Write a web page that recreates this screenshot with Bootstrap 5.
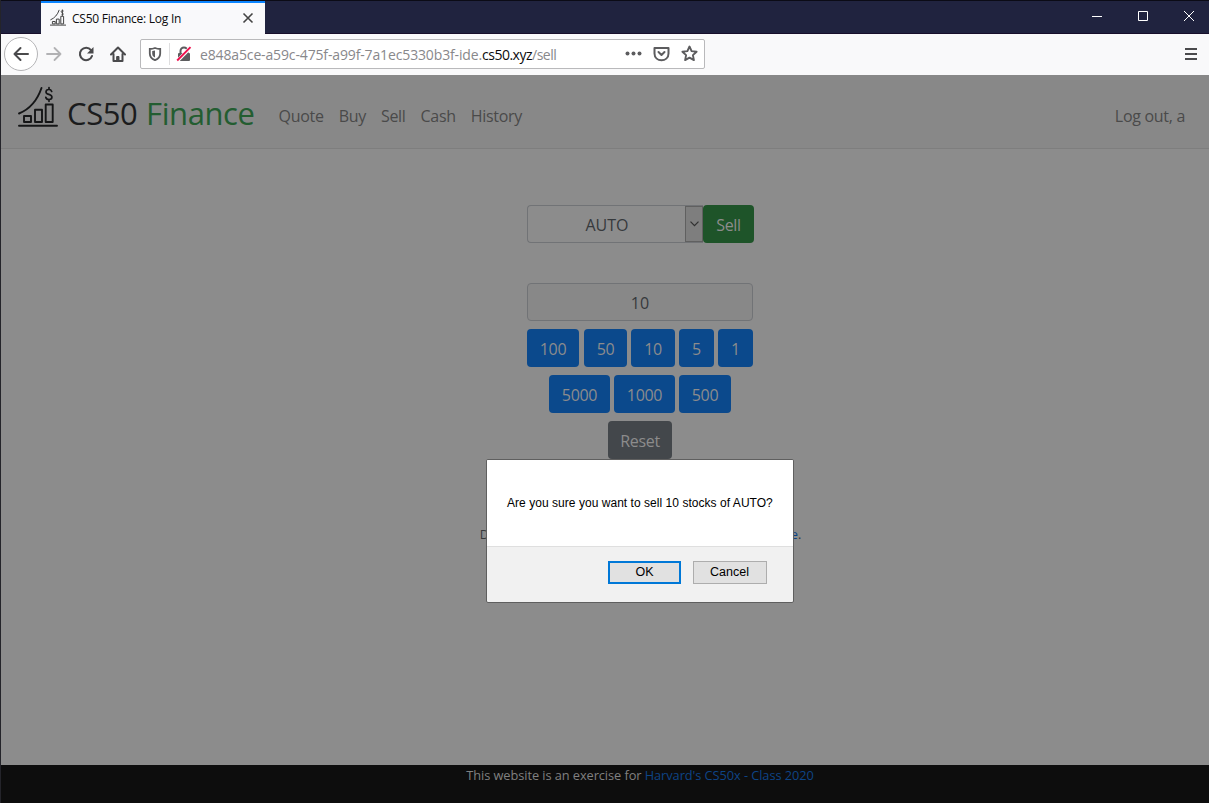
<!DOCTYPE html>
<html lang="en">
<head>
<meta charset="utf-8">
<meta name="viewport" content="width=device-width, initial-scale=1">
<title>CS50 Finance: Log In</title>
<link href="https://cdn.jsdelivr.net/npm/bootstrap@5.3.0/dist/css/bootstrap.min.css" rel="stylesheet">
<style>
body{height:803px;overflow:hidden;background:#8c8c8c;font-family:"Open Sans","Noto Sans",sans-serif;font-size:16px}
.window{height:803px;border-left:1px solid #24242a}
.titlebar{height:34px;background:#20233f;border-top:1px solid #0b0b16;border-bottom:1px solid #170f2b}
.tab{width:224px;height:34px;margin-left:40px;background:#f9f9fb;border-top:2px solid #0a84ff;font-size:12px;color:#0c0c0d;padding:0 11px 0 9px}
.tab-label{letter-spacing:-.25px;margin-left:6px}
.controls{gap:35px;padding-right:14px;padding-bottom:1px}
.toolbar{height:41px;background:#f9f9fa;padding-left:3px;padding-right:12px}
.back{width:34px;height:34px;border:1px solid #b5b5b7;background:#fff}
.url{width:565px;height:30px;margin-left:14px;background:#fff;border:1px solid #b9b9bb;border-radius:2px;padding:0 6px 0 7px;font-size:14px;color:#88888b}
.url-text{letter-spacing:-.14px;margin-left:8px;padding-top:2px}
.url-text b{font-weight:400;color:#0c0c0d}
.url-text b,.url-path{letter-spacing:-.5px}
.url-sep{width:1px;height:22px;background:#dededf;margin:0 6px 0 7px}
.site-nav{height:74px;background:#888;border-bottom:1px solid #7e7e7e;padding:0 24px 0 15px}
.brand{font-size:31px;line-height:40px;color:#1b1c1d}
.brand-name{letter-spacing:-.4px;margin-left:9px;padding-top:2px}
.brand-name span{color:#235d31;margin-left:1px}
.site-nav .nav-link{padding:0;color:#4a4a4a;letter-spacing:-.3px}
.main-links{gap:15px;margin:9px 0 0 24px}
.content{height:616px;padding:56px 0 0 71px}
.trade{width:227px}
.field{height:38px;border:1px solid #717376;border-radius:4px;color:#36393c;background:#8c8c8c}
.amount{width:226px;background:#888}
.arrow{width:18px;height:36px;background:#7e7e7e;border:1px solid #606060}
.btn{height:38px;padding:7px 0 4px;border-radius:4px;font-size:16px;color:#8c8c8c;border:0;letter-spacing:-.3px;line-height:27px}
.c-sell{background:#1e5429;width:51px}
.c-blue{background:#0b498c}
.c-gray{background:#43474b;width:64px}
.source{margin-top:65px;font-size:12.8px;line-height:20px;color:#36393c}
.source a,.foot a{color:#0d4486;text-decoration:none}
.foot{height:38px;background:#0d0d0d;color:#808080;font-size:12.8px;line-height:20px;padding-left:70px;letter-spacing:-.07px}
.confirm{position:absolute;left:486px;top:459px;width:308px;height:144px;border:1px solid #5f5f5f;border-radius:2px;background:#f1f1f1;font-family:"Liberation Sans",Arial,sans-serif;font-size:12px;color:#000;overflow:hidden}
.confirm-text{height:87px;background:#fff;border-bottom:1px solid #dfdfdf;padding-left:20px;letter-spacing:.04px}
.confirm-actions{padding:14px 26px 0 0;gap:12px}
.dlg-btn{height:23px;width:74px;border:1px solid #adadad;background:#e1e1e1;font-size:12.5px;line-height:21px;padding:0 1px 0 0;color:#000}
.dlg-main{width:73px;border:2px solid #0078d7;line-height:19px;padding:0}
svg{display:block;flex:none}
</style>
</head>
<body>
<div class="window d-flex flex-column">
  <div class="titlebar d-flex justify-content-between flex-shrink-0">
    <div class="tab d-flex align-items-center">
      <svg width="16" height="17" viewBox="0 0 40 42" fill="none" stroke="#444" stroke-width="2.5" style="margin-top:-3px"><path d="M0 40H40M1 27Q17 20 23 2M6 31h7v6H6zM16 25h7v12h-7zM27 18h7v19h-7zM34 5c-5-4-8 2-4 4s5 6-1 5M31 1v16"/></svg>
      <span class="tab-label flex-grow-1">CS50 Finance: Log In</span>
      <svg width="12" height="12" viewBox="0 0 12 12" stroke="#444" stroke-width="1.6" style="margin-top:-2px"><path d="M1.500 1.500l9 9M10.500 1.500l-9 9"/></svg>
    </div>
    <div class="controls d-flex align-items-center">
      <svg width="11" height="11" viewBox="0 0 11 11" stroke="#fff"><path d="M0 5.500h10"/></svg>
      <svg width="11" height="11" viewBox="0 0 11 11" stroke="#fff" fill="none"><path d="M.5.500h9v9H.500z"/></svg>
      <svg width="11" height="11" viewBox="0 0 11 11" stroke="#fff"><path d="M0 0l10 10M10 0L0 10"/></svg>
    </div>
  </div>
  <div class="toolbar d-flex align-items-center flex-shrink-0">
    <div class="back rounded-circle d-flex align-items-center justify-content-center" style="margin-top:-2px">
      <svg width="16" height="16" viewBox="0 0 16 16" fill="none" stroke="#4a4a4c" stroke-width="2" stroke-linecap="round" stroke-linejoin="round"><path d="M15 8H1.500M7.500 2l-6 6 6 6"/></svg>
    </div>
    <svg class="ms-2" style="margin-top:-2px" width="16" height="16" viewBox="0 0 16 16" fill="none" stroke="#b2b2b4" stroke-width="1.800" stroke-linecap="round" stroke-linejoin="round"><path d="M1 8h13.500M8.500 2l6 6-6 6"/></svg>
    <svg style="margin:-2px 0 0 16px" width="16" height="16" viewBox="0 0 16 16"><path d="M13 4.100A6.200 6.200 0 1 0 14 10" fill="none" stroke="#4a4a4c" stroke-width="2.100" stroke-linecap="round"/><path d="M15.500 1v6.500H9z" fill="#4a4a4c"/></svg>
    <svg style="margin:-2px 0 0 16px" width="16" height="16" viewBox="0 0 16 16" fill="none" stroke="#4a4a4c" stroke-width="2" stroke-linejoin="round" stroke-linecap="round"><path d="M1 8.500L8 1.500l7 7M3.500 8v7h9V8"/><path d="M7 10.500h2V15H7z" fill="#4a4a4c" stroke-width="1"/></svg>
    <div class="url d-flex align-items-center" style="margin-top:-2px">
      <svg width="14" height="14" viewBox="0 0 14 14"><path d="M7 1c2 .8 3.500 1 5.200 1v4.500C12.200 10 10 12 7 13.200 4 12 1.800 10 1.800 6.500V2C3.500 2 5 1.800 7 1z" fill="none" stroke="#5c5c5e" stroke-width="1.800"/><path d="M7 3.500v7C5 9.500 4.200 8.500 4.200 6.500V4z" fill="#5c5c5e"/></svg>
      <i class="url-sep"></i>
      <svg width="16" height="16" viewBox="0 0 16 16"><path d="M4.500 8V5a3.500 3.500 0 0 1 7 0v3" fill="none" stroke="#5c5c5e" stroke-width="2"/><rect x="2" y="7" width="12" height="8" rx="1" fill="#5c5c5e"/><path d="M.8 15.500L14.500 1.500" stroke="#fff" stroke-width="3.500"/><path d="M1.200 14.500L14.500 1.200" stroke="#f0104e" stroke-width="1.900"/></svg>
      <span class="url-text flex-grow-1">e848a5ce-a59c-475f-a99f-7a1ec5330b3f-ide.<b>cs50.xyz</b><span class="url-path">/sell</span></span>
      <svg width="17" height="5" viewBox="0 0 17 5" fill="#5c5c5e"><circle cx="2.500" cy="2.500" r="2"/><circle cx="8.500" cy="2.500" r="2"/><circle cx="14.500" cy="2.500" r="2"/></svg>
      <svg style="margin:0 11px" width="17" height="16" viewBox="0 0 17 16" fill="none" stroke="#5c5c5e" stroke-width="2" stroke-linecap="round" stroke-linejoin="round"><path d="M1.500 2h14v5.500c0 9-14 9-14 0z"/><path d="M5.500 6l3 3 3-3"/></svg>
      <svg width="17" height="17" viewBox="0 0 17 17" fill="none" stroke="#5c5c5e" stroke-width="1.900" stroke-linejoin="round"><path d="M8.500 1.500l2.100 4.600 5 .6-3.700 3.400 1 5-4.400-2.500-4.400 2.500 1-5L1.400 6.700l5-.6z"/></svg>
    </div>
    <svg class="ms-auto" width="12" height="12" viewBox="0 0 12 12" fill="#4a4a4c" style="margin-top:-2px"><path d="M0 0h12v2H0zM0 5h12v2H0zM0 10h12v2H0z"/></svg>
  </div>
  <nav class="site-nav d-flex align-items-center flex-shrink-0">
    <a class="brand d-flex align-items-center text-decoration-none" href="#">
      <svg style="margin-top:-9px" width="42" height="42" viewBox="0 0 42 42" fill="none" stroke="#151617" stroke-width="1.900" stroke-linecap="round" stroke-linejoin="round"><path d="M3 39.700H41M3 27.500Q19 21 25.500 2M8 30h7v6H8zM19 23.700h7V36h-7zM29.700 18.500h7V36h-7z"/><path d="M35.700 5.500c-1-3-5.700-2.500-5.700.4 0 3.200 5.900 1.800 5.900 5.200 0 3.200-5.400 3.200-6.100.2M33 1.500v1.800m0 10.500v1.500" stroke-width="1.700"/></svg>
      <span class="brand-name">CS50 <span>Finance</span></span>
    </a>
    <div class="d-flex main-links">
      <a class="nav-link" href="#">Quote</a><a class="nav-link" href="#">Buy</a><a class="nav-link" href="#">Sell</a><a class="nav-link" href="#">Cash</a><a class="nav-link" href="#">History</a>
    </div>
    <a class="nav-link ms-auto" style="margin-top:9px" href="#">Log out, a</a>
  </nav>
  <main class="content flex-shrink-0 d-flex flex-column align-items-center">
    <div class="trade d-flex flex-column">
      <div class="d-flex mb-2">
        <div class="field d-flex align-items-center flex-grow-1 rounded-end-0 border-end-0"><span class="flex-grow-1 text-center" style="padding:2px 0 0 1px">AUTO</span><span class="arrow d-flex align-items-center justify-content-center"><svg width="9" height="6" viewBox="0 0 9 6" fill="none" stroke="#303030" stroke-width="1.200"><path d="M.5.700l4 4 4-4"/></svg></span></div>
        <button class="btn c-sell">Sell</button>
      </div>
      <div class="field amount mb-2 d-flex align-items-center justify-content-center" style="margin-top:32px;padding-top:2px">10</div>
      <div class="d-flex mb-2" style="gap:4px">
        <button class="btn c-blue" style="width:52px">100</button><button class="btn c-blue" style="width:43px;margin-left:1px">50</button><button class="btn c-blue" style="width:44px">10</button><button class="btn c-blue" style="width:35px">5</button><button class="btn c-blue" style="width:35px">1</button>
      </div>
      <div class="d-flex justify-content-center mb-2" style="gap:4px;padding-right:1px">
        <button class="btn c-blue" style="width:61px">5000</button><button class="btn c-blue" style="width:61px">1000</button><button class="btn c-blue" style="width:52px">500</button>
      </div>
      <button class="btn c-gray align-self-center" style="margin-right:1px">Reset</button>
    </div>
    <div class="source">Data provided for free by IEX. View <a href="#">IEX's Terms of Use</a>.</div>
  </main>
  <footer class="foot flex-shrink-0 text-center">This website is an exercise for <a href="#">Harvard's CS50x - Class 2020</a></footer>
</div>
<div class="confirm" role="dialog">
  <div class="confirm-text d-flex align-items-center">Are you sure you want to sell 10 stocks of AUTO?</div>
  <div class="confirm-actions d-flex justify-content-end"><button class="dlg-btn dlg-main">OK</button><button class="dlg-btn">Cancel</button></div>
</div>
<script src="https://cdn.jsdelivr.net/npm/bootstrap@5.3.0/dist/js/bootstrap.bundle.min.js"></script>
</body>
</html>
